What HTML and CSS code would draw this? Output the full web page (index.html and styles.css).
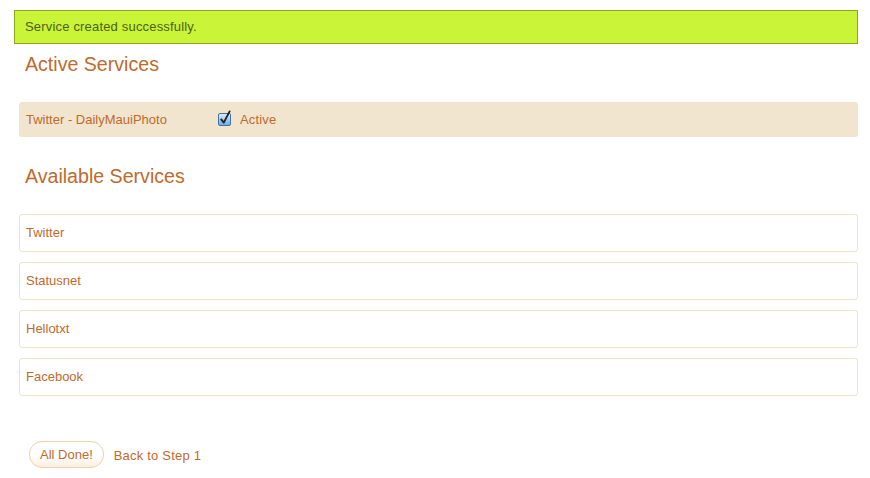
FILE: index.html
```html
<!DOCTYPE html>
<html>
<head>
<meta charset="utf-8">
<link rel="stylesheet" href="styles.css">
</head>
<body>
<div class="page">
  <div class="flash">Service created successfully.</div>
  <h2 class="heading">Active Services</h2>
  <div class="active-row">
    <span class="svc-name">Twitter - DailyMauiPhoto</span>
    <span class="check">
      <svg width="15" height="16" viewBox="0 0 15 16">
        <defs>
          <linearGradient id="cb" x1="0" y1="0" x2="0" y2="1">
            <stop offset="0" stop-color="#e2f0fc"/>
            <stop offset="1" stop-color="#6fa8e0"/>
          </linearGradient>
        </defs>
        <rect x="0.5" y="3.5" width="12" height="12" rx="1.5" fill="url(#cb)" stroke="#45719f"/>
        <path d="M3.2 9.4 L5.8 12.6 L11.6 1.4" fill="none" stroke="#1b2430" stroke-width="1.9" stroke-linecap="round" stroke-linejoin="round"/>
      </svg>
    </span>
    <span class="status">Active</span>
  </div>
  <h2 class="heading heading-avail">Available Services</h2>
  <div class="list">
    <div class="item">Twitter</div>
    <div class="item">Statusnet</div>
    <div class="item">Hellotxt</div>
    <div class="item">Facebook</div>
  </div>
  <div class="actions">
    <span class="btn">All Done!</span>
    <a class="back" href="#">Back to Step 1</a>
  </div>
</div>
</body>
</html>
```
FILE: styles.css
```css
html, body {
  margin: 0;
  padding: 0;
  background: #ffffff;
}
body {
  font-family: "Liberation Sans", Arial, sans-serif;
  font-size: 13px;
  color: #bf6a2c;
}
.page {
  padding: 10px 0 0 14px;
  width: 844px;
}
.flash {
  box-sizing: border-box;
  height: 34px;
  border: 1px solid #8aa81c;
  background: #c9f438;
  color: #4e6019;
  line-height: 32px;
  padding: 0 10px;
  letter-spacing: 0.18px;
}
.heading {
  margin: 8px 0 0 11px;
  font-size: 19.6px;
  line-height: 24px;
  font-weight: normal;
  color: #bf6a2c;
}
.heading-avail {
  margin-top: 27px;
}
.active-row {
  margin: 26px 0 0 5px;
  height: 35px;
  background: #f1e5cf;
  border-radius: 3px;
  display: flex;
  align-items: center;
  padding-left: 7px;
}
.svc-name {
  width: 192px;
}
.check {
  display: flex;
  width: 22px;
  margin-top: -3px;
}
.status {
  letter-spacing: 0.15px;
}
.list {
  margin: 26px 0 0 5px;
  display: flex;
  flex-direction: column;
  gap: 10px;
}
.item {
  box-sizing: border-box;
  height: 38px;
  border: 1px solid #f1e3c6;
  border-radius: 3px;
  padding-left: 6px;
  line-height: 36px;
}
.actions {
  margin: 45px 0 0 15px;
  display: flex;
  align-items: center;
  gap: 10px;
}
.btn {
  box-sizing: border-box;
  height: 27px;
  line-height: 26px;
  padding: 0 10px;
  border: 1px solid #f0d0ae;
  border-radius: 13px;
  background: linear-gradient(#ffffff 0%, #ffffff 55%, #fbeee0 100%);
  color: #bf6a2c;
}
.back {
  color: #bf6a2c;
  text-decoration: none;
  letter-spacing: 0.2px;
  padding-top: 2px;
}
```
